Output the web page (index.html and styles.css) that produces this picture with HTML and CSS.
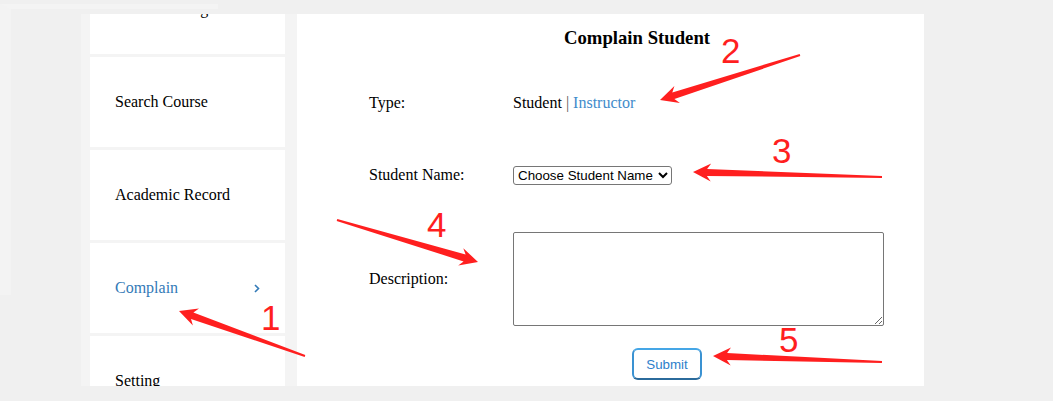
FILE: index.html
```html
<!DOCTYPE html>
<html lang="en">
<head>
<meta charset="utf-8">
<title>Complain Student</title>
<link rel="stylesheet" href="styles.css">
</head>
<body>
<div class="ghost"></div>
<div class="layout">
  <nav class="sidebar">
    <div class="nav-card nav-first">Course Taking</div>
    <div class="nav-card">Search Course</div>
    <div class="nav-card">Academic Record</div>
    <div class="nav-card nav-active">Complain
      <svg class="chev" width="6" height="9" viewBox="0 0 6 9"><polyline points="1,1 4.5,4.5 1,8" fill="none" stroke="#337ab7" stroke-width="1.6"/></svg>
    </div>
    <div class="nav-card">Setting</div>
  </nav>
  <main class="panel">
    <h3 class="title">Complain Student</h3>
    <form class="complain-form">
      <div class="row row-type">
        <span class="label">Type:</span>
        <span class="value">Student <span class="sep">|</span> <a class="link">Instructor</a></span>
      </div>
      <div class="row row-name">
        <span class="label">Student Name:</span>
        <span class="value"><select class="select"><option>Choose Student Name</option></select></span>
      </div>
      <div class="row row-desc">
        <span class="label">Description:</span>
        <span class="value"><textarea class="textarea"></textarea></span>
      </div>
      <div class="row row-submit">
        <button type="button" class="submit">Submit</button>
      </div>
    </form>
  </main>
</div>
<svg class="annotations" width="1053" height="401" viewBox="0 0 1053 401">
  <g fill="#ff1f1f">
    <polygon points="179,311 192.9,325.6 191.0,319.0 304.7,356.9 305.3,355.1 193.4,312.5 199.0,308.6"/>
    <polygon points="660,100 679.9,103.1 674.4,99.0 800.3,56.0 799.7,54.0 672.3,92.4 674.4,85.9"/>
    <polygon points="693,172 710.75,181.5 706.9,175.9 881.97,178 882.03,176 707.1,168.9 711.2,163.5"/>
    <polygon points="478,262 463.3,248.2 465.6,254.6 337.3,219.0 336.7,221.0 463.6,261.4 458.2,265.5"/>
    <polygon points="713,356 730.7,365.6 726.9,360 881.96,363 882.04,361 727.1,353 731.0,347.6"/>
  </g>
  <g fill="#ff1f1f" font-family="Liberation Sans, Arial, sans-serif" font-size="35">
    <text x="261" y="330">1</text>
    <text x="721" y="63">2</text>
    <text x="772" y="163">3</text>
    <text x="427" y="237">4</text>
    <text x="779" y="352">5</text>
  </g>
</svg>
</body>
</html>
```
FILE: styles.css
```css
html, body {
  margin: 0;
  padding: 0;
}
body {
  background: #f0f0f0;
  font-family: "Liberation Serif", "Times New Roman", serif;
  font-size: 16px;
  color: #000;
  width: 1053px;
  height: 401px;
  overflow: hidden;
  position: relative;
}
.ghost {
  position: absolute;
  left: 0;
  top: 4px;
  width: 207px;
  height: 286px;
  border-top: 5px solid #f4f4f4;
  border-left: 11px solid #f3f3f3;
  pointer-events: none;
}
.layout {
  display: flex;
  margin-left: 81px;
  padding-top: 14px;
  height: 372px;
}
.sidebar {
  width: 195px;
  background: #f4f4f4;
  padding: 0 12px 0 9px;
  overflow: hidden;
  display: flex;
  flex-direction: column;
  gap: 3px;
  position: relative;
}
.nav-card {
  flex: 0 0 90px;
  height: 90px;
  background: #fff;
  display: flex;
  align-items: center;
  justify-content: space-between;
  padding: 0 25px;
}
.nav-first {
  margin-top: -50px;
}
.nav-active {
  color: #337ab7;
}
.chev {
  display: block;
}
.panel {
  width: 555px;
  background: #fff;
  padding: 13px 0 0 72px;
}
.title {
  margin: 0;
  font-size: 18.72px;
  line-height: 21px;
  font-weight: bold;
  text-align: center;
  padding-left: 53px;
  margin-left: -72px;
}
.complain-form {
  display: flex;
  flex-direction: column;
}
.row {
  display: flex;
  align-items: center;
}
.label {
  width: 144px;
  flex: 0 0 144px;
}
.row-type {
  margin-top: 41px;
  height: 28px;
}
.row-name {
  margin-top: 44px;
  height: 28px;
}
.row-desc {
  margin-top: 43px;
  height: 94px;
}
.row-submit {
  margin-top: 22px;
  height: 32px;
  padding-left: 263px;
}
.sep {
  color: #555;
}
.link {
  color: #428bca;
  text-decoration: none;
}
.select {
  font-family: "Liberation Sans", Arial, sans-serif;
  font-size: 13.33px;
  color: #000;
  border: 1px solid #767676;
  border-radius: 3px;
  background: #fff;
  width: 159px;
  height: 19px;
  padding: 0;
  display: block;
}
.textarea {
  display: block;
  box-sizing: border-box;
  width: 371px;
  height: 94px;
  border: 1px solid #767676;
  border-radius: 2px;
  margin: 0;
}
.submit {
  box-sizing: border-box;
  width: 70px;
  height: 32px;
  background: #fff;
  border: 2px solid #3a92d2;
  border-top-color: #45a6e6;
  border-bottom-color: #2b6b9c;
  border-radius: 6px;
  color: #2d7fcb;
  font-family: "Liberation Sans", Arial, sans-serif;
  font-size: 13.33px;
  padding: 0;
}
.annotations {
  position: absolute;
  left: 0;
  top: 0;
  pointer-events: none;
}
```
